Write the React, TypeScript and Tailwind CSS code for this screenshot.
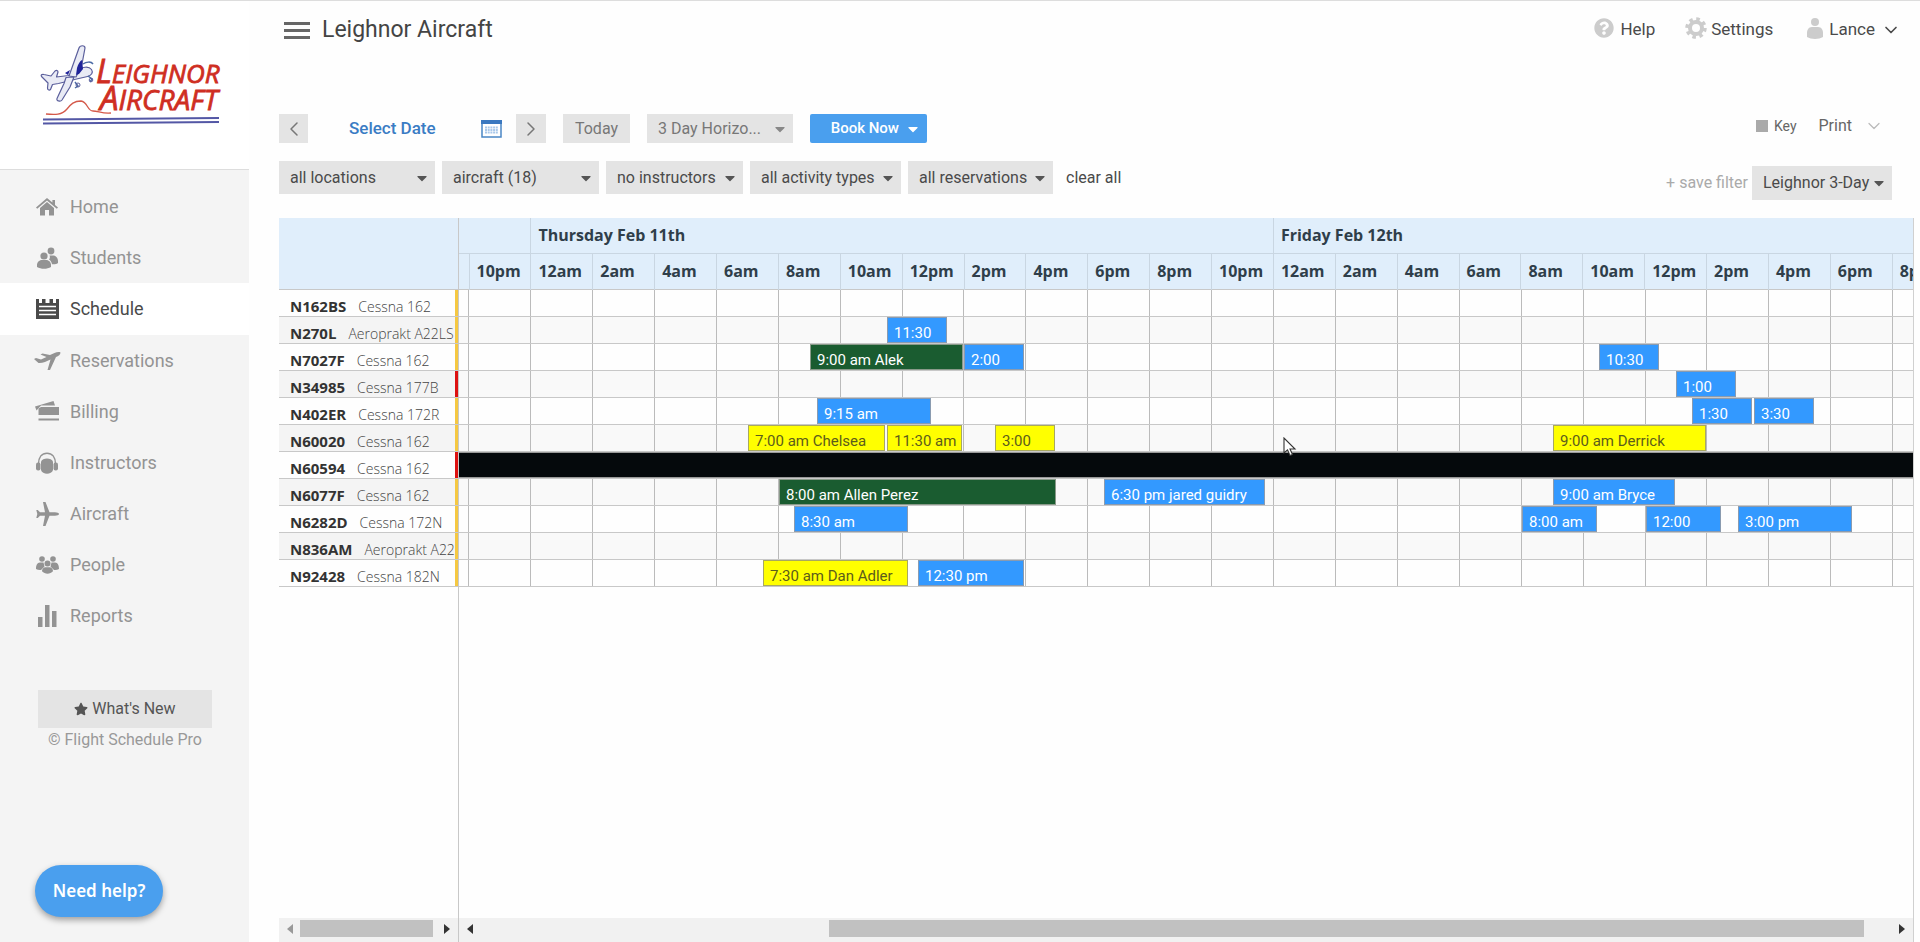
import type { ReactNode } from 'react';
import { ChevronDown, ChevronLeft, ChevronRight } from 'lucide-react';
import { FaCaretDown, FaQuestionCircle, FaStar } from 'react-icons/fa';

type BookingKind = 'rental' | 'dual' | 'pending' | 'blocked';

interface Booking {
    // hours counted from Thursday midnight
    start: number;
    end: number;
    label: string;
    kind: BookingKind;
}

interface Aircraft {
    tail: string;
    model: string;
    grounded?: boolean;
    bookings: Booking[];
}

const DAY_WIDTH = 743;
const LEAD_WIDTH = 71;
const HOUR_WIDTH = DAY_WIDTH / 24;

const bookingStyles: Record<BookingKind, string> = {
    rental: 'bg-[#3399ff] border-[#8a9bb0] text-white',
    dual: 'bg-[#1a5c30] border-[#8a9a8a] text-white',
    pending: 'bg-[#ffff00] border-[#a8a860] text-[#5c5c1c]',
    blocked: 'bg-[#05090c] border-[#999999] text-white'
};

const fleet: Aircraft[] = [
    { tail: 'N162BS', model: 'Cessna 162', bookings: [] },
    {
        tail: 'N270L',
        model: 'Aeroprakt A22LS',
        bookings: [{ start: 11.5, end: 13.5, label: '11:30', kind: 'rental' }]
    },
    {
        tail: 'N7027F',
        model: 'Cessna 162',
        bookings: [
            { start: 9, end: 14, label: '9:00 am Alek', kind: 'dual' },
            { start: 14, end: 16, label: '2:00', kind: 'rental' },
            { start: 34.5, end: 36.5, label: '10:30', kind: 'rental' }
        ]
    },
    {
        tail: 'N34985',
        model: 'Cessna 177B',
        grounded: true,
        bookings: [{ start: 37, end: 39, label: '1:00', kind: 'rental' }]
    },
    {
        tail: 'N402ER',
        model: 'Cessna 172R',
        bookings: [
            { start: 9.25, end: 13, label: '9:15 am', kind: 'rental' },
            { start: 37.5, end: 39.5, label: '1:30', kind: 'rental' },
            { start: 39.5, end: 41.5, label: '3:30', kind: 'rental' }
        ]
    },
    {
        tail: 'N60020',
        model: 'Cessna 162',
        bookings: [
            { start: 7, end: 11.5, label: '7:00 am Chelsea', kind: 'pending' },
            { start: 11.5, end: 14, label: '11:30 am', kind: 'pending' },
            { start: 15, end: 17, label: '3:00', kind: 'pending' },
            { start: 33, end: 38, label: '9:00 am Derrick', kind: 'pending' }
        ]
    },
    {
        tail: 'N60594',
        model: 'Cessna 162',
        grounded: true,
        bookings: [{ start: -3, end: 48, label: '', kind: 'blocked' }]
    },
    {
        tail: 'N6077F',
        model: 'Cessna 162',
        bookings: [
            { start: 8, end: 17, label: '8:00 am Allen Perez', kind: 'dual' },
            { start: 18.5, end: 23.75, label: '6:30 pm jared guidry', kind: 'rental' },
            { start: 33, end: 37, label: '9:00 am Bryce', kind: 'rental' }
        ]
    },
    {
        tail: 'N6282D',
        model: 'Cessna 172N',
        bookings: [
            { start: 8.5, end: 12.25, label: '8:30 am', kind: 'rental' },
            { start: 32, end: 34.5, label: '8:00 am', kind: 'rental' },
            { start: 36, end: 38.5, label: '12:00', kind: 'rental' },
            { start: 39, end: 42.75, label: '3:00 pm', kind: 'rental' }
        ]
    },
    { tail: 'N836AM', model: 'Aeroprakt A22', bookings: [] },
    {
        tail: 'N92428',
        model: 'Cessna 182N',
        bookings: [
            { start: 7.5, end: 12.25, label: '7:30 am Dan Adler', kind: 'pending' },
            { start: 12.5, end: 16, label: '12:30 pm', kind: 'rental' }
        ]
    }
];

const dayHours = ['12am', '2am', '4am', '6am', '8am', '10am', '12pm', '2pm', '4pm', '6pm', '8pm', '10pm'];
const headerHours = ['10pm', ...dayHours, ...dayHours];

const icon = (width: number, height: number, children: ReactNode) => (
    <svg width={width} height={height} viewBox={`0 0 ${width} ${height}`} fill="currentColor" aria-hidden="true">
        {children}
    </svg>
);

const navItems = [
    {
        name: 'Home',
        icon: icon(
            22,
            20,
            <>
                <path d="M11 1 0 10.5l1.2 1.2L11 3.4l9.800 8.300L22 10.500l-3-2.600V3h-2.600v2.600z" />
                <path d="M11 5 4 11v7.500h5V13h4v5.500h5V11z" />
            </>
        )
    },
    {
        name: 'Students',
        icon: icon(
            22,
            22,
            <>
                <circle cx="15" cy="4" r="3.400" />
                <path d="M13.500 8.500h3.500c3 0 5 2.500 5 5.500v2c-2 1.500-4 1.500-6 1.200-.3-2.200-1.500-3.700-3-4.700 1-1 1.200-2.700.5-4z" />
                <circle cx="8" cy="9" r="3.600" />
                <path d="M6 13h4c3.200 0 5 2.500 5 5v2c-4 2.400-10 2.400-14 0v-2c0-2.500 2-5 5-5z" />
            </>
        )
    },
    {
        name: 'Schedule',
        icon: icon(
            23,
            20,
            <>
                <path d="M0 0h3v4h3V0h3.500v4h4V0H17v4h3V0h3v20H0z" />
                <path d="M3 7.500h17M3 11.500h17M3 15.500h17" stroke="#ffffff" strokeWidth="1.300" />
            </>
        )
    },
    {
        name: 'Reservations',
        icon: icon(
            27,
            20,
            <path d="M26.500 1.500c-1.500-1-4-.3-6 .5l-4.500 2L8.500 2.500 6.500 3.500l6 2.500-5.500 2.500L2 7 0 8l4.500 4c4 .3 8-1.500 12-3.500L13.500 19h2.500l6-13c2.500-1 4.500-2.500 4.500-4.500z" />
        )
    },
    {
        name: 'Billing',
        icon: icon(
            25,
            21,
            <>
                <path d="M0 5.500 18.500 0 20 4.500H6L1.500 9.500z" />
                <path d="M3.500 7.500 6 6h18v8H3.500z" />
                <path d="M3.500 17.500H24v2H3.500z" />
            </>
        )
    },
    {
        name: 'Instructors',
        icon: icon(
            22,
            22,
            <>
                <path d="M2.500 12C2.500 5 6 1.200 11 1.200S19.500 5 19.500 12" fill="none" stroke="currentColor" strokeWidth="1.500" />
                <rect x="0" y="10.500" width="4.500" height="8" rx="2" />
                <rect x="17.500" y="10.500" width="4.500" height="8" rx="2" />
                <path d="M5 9.500C6.500 5.500 15.500 5.500 17 9.500v8.500c-1.500 5-10.500 5-12 0z" />
            </>
        )
    },
    {
        name: 'Aircraft',
        icon: icon(
            23,
            26,
            <path d="M23 13c0-1-2-1.700-4-1.700h-5.500L9.500 1H7l2 10.300H4L1.800 9H.3l1 4-1 4h1.500L4 14.700h5L7 25h2.500l4-10.300H19c2 0 4-.7 4-1.700z" />
        )
    },
    {
        name: 'People',
        icon: icon(
            23,
            18,
            <>
                <circle cx="6" cy="3" r="2.800" />
                <circle cx="17" cy="3" r="2.800" />
                <path d="M4 6.500h3.500l1 4L5 14c-1.800.2-3.500 0-5-1C0 9.500 1 6.500 4 6.500zM19 6.500h-3.500l-1 4L18 14c1.800.2 3.500 0 5-1 0-3.500-1-6.500-4-6.500z" />
                <circle cx="11.500" cy="7.500" r="3" />
                <path d="M9.500 11.300h4c2.200 0 3.500 1.700 3.500 4-3 3.200-8 3.200-11 0 0-2.300 1.300-4 3.500-4z" />
            </>
        )
    },
    {
        name: 'Reports',
        icon: icon(
            19,
            22,
            <>
                <rect x="0" y="12" width="4.500" height="10" />
                <rect x="7" y="0" width="4.500" height="22" />
                <rect x="14" y="6" width="4.500" height="16" />
            </>
        )
    }
];

function Logo() {
    return (
        <svg width="188" height="86" viewBox="0 0 188 86" role="img" aria-label="Leighnor Aircraft">
            <g transform="translate(-1 3)">
                <g fill="#e9ebf5" stroke="#5b5f9c" strokeWidth="1.200" strokeLinejoin="round">
                    <path d="M3 33c-2-2 0-3 2-2.500l7 1.500 4-5c1.500-1 3-.5 3 1l-1.500 5 12-1.500 8-6c6-2 12-4 15 0 2 3 0 6-4 7l-13 3-16 4-6 1-2 5c-1.500 1.500-3 0-3-1.500l.500-5z" />
                    <path d="M30 32 40 4c1-3 6-3 6 0l-3 16-6 13z" />
                    <path d="M35 33l-4 10-8 13c-1.500 2-6 1-5-1.500l7-15 2-6z" />
                </g>
                <path d="M38 24c1-4 3-7 5-8l1 9-4 5-3 1zM26 29l5-3-2 5z" fill="#20249a" />
                <path d="M44 20c3-2 8-3 10 0M36 38l3 4-3 2M49 32l4 3-2 3" fill="none" stroke="#4c6ba5" strokeWidth="1.500" />
                <circle cx="39" cy="41" r="2" fill="none" stroke="#5b5f9c" />
                <circle cx="52" cy="36" r="1.800" fill="none" stroke="#5b5f9c" />
            </g>
            <path d="M6 73c9 1 16 1 21-5 4-5 7-8 14-8 7 1 6 10 12 10 5 0 10 3 18 2" fill="none" stroke="#d4594a" strokeWidth="1.300" />
            <path d="M3 78.500 179 77M3 82.500 179 81" stroke="#5357a5" strokeWidth="2" />
            <g fill="#cf2e22" stroke="#cf2e22" strokeWidth="0.800" fontStyle="italic" className="font-['Open_Sans',sans-serif]">
                <text x="56" y="42" fontSize="33">
                    L<tspan fontSize="26">EIGHNOR</tspan>
                </text>
                <text x="60" y="69" fontSize="33">
                    A<tspan fontSize="28">IRCRAFT</tspan>
                </text>
            </g>
        </svg>
    );
}

function Sidebar() {
    return (
        <aside className="flex w-[249px] shrink-0 flex-col bg-[#f4f4f4]">
            <div className="flex h-[169px] items-start border-b border-[#dddddd] bg-white pt-10 pl-10">
                <Logo />
            </div>
            <nav className="pt-[11px]">
                {navItems.map((item) => {
                    const active = item.name === 'Schedule';
                    return (
                        <a
                            key={item.name}
                            href="#"
                            className={`flex items-center text-lg ${active ? 'h-[52px] bg-white text-[#4a4a4a]' : 'h-[51px] text-[#939393]'}`}
                        >
                            <span className="ml-[33px] flex w-7 justify-center">{item.icon}</span>
                            <span className="ml-[9px]">{item.name}</span>
                        </a>
                    );
                })}
            </nav>
            <div className="mt-[49px] flex flex-col items-center pl-px">
                <button type="button" className="flex h-[38px] w-[174px] items-center justify-center gap-1 bg-[#e4e4e4] text-[#555555]">
                    <FaStar className="size-[14px]" />
                    What's New
                </button>
                <span className="text-[#999999]">© Flight Schedule Pro</span>
            </div>
            <button
                type="button"
                className="mt-auto mb-[25px] ml-[35px] h-[52px] w-32 rounded-full bg-[#4a9fee] font-['Noto_Sans',sans-serif] text-[17px] font-semibold text-white shadow-[0_3px_6px_rgba(0,0,0,0.35)]"
            >
                Need help?
            </button>
        </aside>
    );
}

function GearIcon() {
    return (
        <svg width="22" height="22" viewBox="0 0 22 22" fill="none" stroke="currentColor" aria-hidden="true">
            <circle cx="11" cy="11" r="6" strokeWidth="4" />
            <circle cx="11" cy="11" r="9" strokeWidth="3.500" strokeDasharray="3.530 3.530" />
        </svg>
    );
}

function PersonIcon() {
    return (
        <svg width="16" height="21" viewBox="0 0 16 21" fill="currentColor" aria-hidden="true">
            <circle cx="8" cy="4" r="4" />
            <path d="M5 9h6c3.500 0 5 3 5 6v4c-4 2.500-12 2.500-16 0v-4c0-3 1.500-6 5-6z" />
        </svg>
    );
}

function CalendarIcon() {
    return (
        <svg width="21" height="18" viewBox="0 0 21 18" aria-hidden="true">
            <rect x="1" y="1" width="19" height="16" fill="#ffffff" stroke="#4a86c5" strokeWidth="1.500" />
            <path d="M0 0h21v4H0z" fill="#3a78c0" />
            <path d="M4 7.500h13M4 10h13M4 12.500h13" stroke="#a9c8ea" strokeWidth="1.800" strokeDasharray="2 0.700" />
        </svg>
    );
}

interface DropdownProps {
    label: string;
    value: string;
    className: string;
    caret?: string;
}

function Dropdown({ label, value, className, caret = 'text-[#555555]' }: DropdownProps) {
    return (
        <div className={`relative flex bg-[#e4e4e4] ${className}`}>
            <select aria-label={label} className="w-full appearance-none bg-transparent pl-[11px] outline-none">
                <option>{value}</option>
            </select>
            <FaCaretDown className={`pointer-events-none absolute top-1/2 right-[5px] size-4 -translate-y-1/2 ${caret}`} />
        </div>
    );
}

function TopBar() {
    return (
        <header className="flex h-[58px] items-center pr-[13px] text-[17px] text-[#4a4a4a]">
            <button type="button" aria-label="Menu" className="ml-[5px] flex w-[26px] flex-col gap-1">
                <span className="h-[3px] bg-[#666666]" />
                <span className="h-[3px] bg-[#666666]" />
                <span className="h-[3px] bg-[#666666]" />
            </button>
            <h1 className="ml-3 text-[23px] text-[#444444]">Leighnor Aircraft</h1>
            <nav className="ml-auto flex items-center">
                <a href="#" className="flex items-center gap-[6px]">
                    <FaQuestionCircle className="mb-1 size-5 text-[#cccccc]" />
                    Help
                </a>
                <a href="#" className="ml-[30px] flex items-center gap-1">
                    <span className="mb-1 text-[#cccccc]">
                        <GearIcon />
                    </span>
                    Settings
                </a>
                <button type="button" className="ml-[34px] flex items-center gap-[6px]">
                    <span className="mb-1 text-[#cccccc]">
                        <PersonIcon />
                    </span>
                    Lance
                    <ChevronDown className="size-5" strokeWidth={2} />
                </button>
            </nav>
        </header>
    );
}

function Toolbar() {
    return (
        <div className="mt-[55px] flex justify-between pr-[22px] text-base text-[#4a4a4a]">
            <div>
                <div className="flex h-[29px] items-stretch">
                    <button type="button" aria-label="Previous" className="flex w-[29px] items-center justify-center bg-[#e4e4e4] text-[#777777]">
                        <ChevronLeft className="size-6" strokeWidth={1.5} />
                    </button>
                    <button type="button" className="flex w-[208px] items-center justify-between pr-[14px] pl-[41px] text-[17px] font-medium text-[#3a7cc4]">
                        Select Date
                        <CalendarIcon />
                    </button>
                    <button type="button" aria-label="Next" className="flex w-[30px] items-center justify-center bg-[#e4e4e4] text-[#777777]">
                        <ChevronRight className="size-6" strokeWidth={1.5} />
                    </button>
                    <button type="button" className="ml-[17px] w-[67px] bg-[#e4e4e4] text-[#777777]">
                        Today
                    </button>
                    <Dropdown
                        label="Horizon"
                        value="3 Day Horizo..."
                        className="ml-[17px] w-[146px] text-[#777777]"
                        caret="text-[#888888]"
                    />
                    <button
                        type="button"
                        className="ml-[17px] flex w-[117px] items-center justify-end gap-[6px] rounded-xs bg-[#4a9fee] pr-[6px] text-[15px] font-medium text-white"
                    >
                        Book Now
                        <FaCaretDown className="size-4" />
                    </button>
                </div>
                <div className="mt-[18px] flex h-[33px] items-stretch gap-[7px]">
                    <Dropdown label="Locations" value="all locations" className="w-[156px]" />
                    <Dropdown label="Aircraft" value="aircraft (18)" className="w-[157px]" />
                    <Dropdown label="Instructors" value="no instructors" className="w-[137px]" />
                    <Dropdown label="Activity types" value="all activity types" className="w-[151px]" />
                    <Dropdown label="Reservations" value="all reservations" className="w-[145px]" />
                    <button type="button" className="ml-[6px]">
                        clear all
                    </button>
                </div>
            </div>
            <div className="flex flex-col items-end">
                <div className="flex h-6 items-center">
                    <span className="size-3 bg-[#aaaaaa]" />
                    <button type="button" className="ml-[6px] text-sm text-[#666666]">
                        Key
                    </button>
                    <button type="button" className="mr-2 ml-[22px] flex items-center gap-3 text-[#666666]">
                        Print
                        <ChevronDown className="size-5 text-[#bbbbbb]" strokeWidth={1.5} />
                    </button>
                </div>
                <div className="mt-7 flex h-[34px] items-stretch">
                    <button type="button" className="mr-1 text-[#aaaaaa]">
                        + save filter
                    </button>
                    <Dropdown label="Saved filter" value="Leighnor 3-Day" className="w-[140px]" />
                </div>
            </div>
        </div>
    );
}

function AircraftList() {
    return (
        <table className="w-full table-fixed border-collapse">
            <thead>
                <tr className="h-[71px] border-b border-[#c8c8c8] bg-[#e0eefb]">
                    <th aria-label="Aircraft" />
                </tr>
            </thead>
            <tbody>
                {fleet.map((plane) => (
                    <tr key={plane.tail} className="h-[27px] border-b border-[#c8c8c8] even:bg-[#f4f4f4]">
                        <td
                            className={`p-0 pt-[7px] pl-[11px] text-[15px] leading-[18px] whitespace-nowrap text-[#444444] ${plane.grounded ? 'shadow-[inset_-3px_0_#dd1111]' : 'shadow-[inset_-3px_0_#f5c842]'}`}
                        >
                            <span className="font-bold text-[#333333]">{plane.tail}</span>
                            <span className="ml-3 text-[14px] font-light">{plane.model}</span>
                        </td>
                    </tr>
                ))}
            </tbody>
        </table>
    );
}

function TimelineHeader() {
    return (
        <table className="w-[1557px] table-fixed border-collapse bg-[#e0eefb] text-left font-bold text-[#2f3e4a]">
            <colgroup>
                <col className="w-[10px]" />
                {headerHours.map((_, i) => (
                    <col key={i} />
                ))}
            </colgroup>
            <thead>
                <tr className="h-[35px] border-b border-[#c9d6e2]">
                    <th colSpan={2} />
                    <th colSpan={12} className="border-l border-[#c9d6e2] p-0 pb-px pl-[7px]">
                        Thursday Feb 11th
                    </th>
                    <th colSpan={12} className="border-l border-[#c9d6e2] p-0 pb-px pl-[7px]">
                        Friday Feb 12th
                    </th>
                </tr>
                <tr className="h-9 border-b border-[#c8c8c8]">
                    <th />
                    {headerHours.map((hour, i) => (
                        <th key={i} className="border-l border-[#c9d6e2] p-0 pb-px pl-[7px]">
                            {hour}
                        </th>
                    ))}
                </tr>
            </thead>
        </table>
    );
}

function BookingBlock({ booking }: { booking: Booking }) {
    const left = LEAD_WIDTH + 1 + Math.round(booking.start * HOUR_WIDTH);
    const width = Math.round((booking.end - booking.start) * HOUR_WIDTH) - 2;

    return (
        <button
            type="button"
            aria-label={booking.label || 'Unavailable'}
            className={`absolute top-0 flex h-[26px] items-center overflow-hidden border pt-[6px] pl-[6px] text-[15px] leading-5 whitespace-nowrap ${bookingStyles[booking.kind]}`}
            style={{ left, width }}
        >
            {booking.label}
        </button>
    );
}

function TimelineRow({ plane }: { plane: Aircraft }) {
    return (
        <div className="relative flex h-[27px] border-b border-[#c8c8c8] even:bg-[#f9f9f9]">
            <div className="w-[9px] shrink-0" />
            <div className="w-[62px] shrink-0 border-l border-[#bbbbbb]" />
            {['thu', 'fri'].map((day) => (
                <div key={day} className="grid w-[743px] shrink-0 grid-cols-12">
                    {dayHours.map((hour) => (
                        <div key={hour} className="border-l border-[#bbbbbb]" />
                    ))}
                </div>
            ))}
            {plane.bookings.map((booking) => (
                <BookingBlock key={booking.start} booking={booking} />
            ))}
        </div>
    );
}

function ScrollArrow({ direction, muted }: { direction: 'left' | 'right'; muted?: boolean }) {
    return (
        <svg width="6" height="10" viewBox="0 0 6 10" className={muted ? 'text-[#999999]' : 'text-[#333333]'} fill="currentColor" aria-hidden="true">
            <path d={direction === 'left' ? 'M6 0v10L0 5z' : 'M0 0v10l6-5z'} />
        </svg>
    );
}

function Cursor() {
    return (
        <svg width="14" height="20" viewBox="0 0 14 20" className="pointer-events-none absolute top-[219px] left-[824px]" aria-hidden="true">
            <path d="M1 1v15l3.500-3.200L7 18.500l2.500-1-2.500-5.500h5z" fill="#ffffff" stroke="#333333" strokeWidth="1.100" />
        </svg>
    );
}

function Schedule() {
    return (
        <section className="mt-[18px] flex flex-1 font-['Open_Sans',sans-serif] text-base">
            <div className="flex w-[180px] shrink-0 flex-col border-r border-[#c8c8c8]">
                <AircraftList />
                <div className="mt-auto flex h-6 items-center bg-[#f1f1f1] px-2 pb-[3px]">
                    <ScrollArrow direction="left" muted />
                    <div className="mr-[11px] ml-[7px] h-[17px] flex-1 bg-[#c1c1c1]" />
                    <ScrollArrow direction="right" />
                </div>
            </div>
            <div className="relative flex min-w-0 flex-1 flex-col overflow-hidden border-r border-[#d0d0d0]">
                <TimelineHeader />
                <div className="w-full overflow-hidden font-[Roboto,sans-serif]">
                    {fleet.map((plane) => (
                        <TimelineRow key={plane.tail} plane={plane} />
                    ))}
                </div>
                <div className="mt-auto flex h-6 items-center bg-[#f1f1f1] px-2 pb-[3px]">
                    <ScrollArrow direction="left" />
                    <div className="mr-[35px] ml-auto h-[17px] w-[72%] bg-[#c1c1c1]" />
                    <ScrollArrow direction="right" />
                </div>
                <Cursor />
            </div>
        </section>
    );
}

export default function App() {
    return (
        <div className="flex min-h-screen border-t border-[#dddddd] bg-[#fefefe] font-[Roboto,sans-serif]">
            <Sidebar />
            <main className="flex min-w-0 flex-1 flex-col pr-[6px] pl-[30px]">
                <TopBar />
                <Toolbar />
                <Schedule />
            </main>
        </div>
    );
}
